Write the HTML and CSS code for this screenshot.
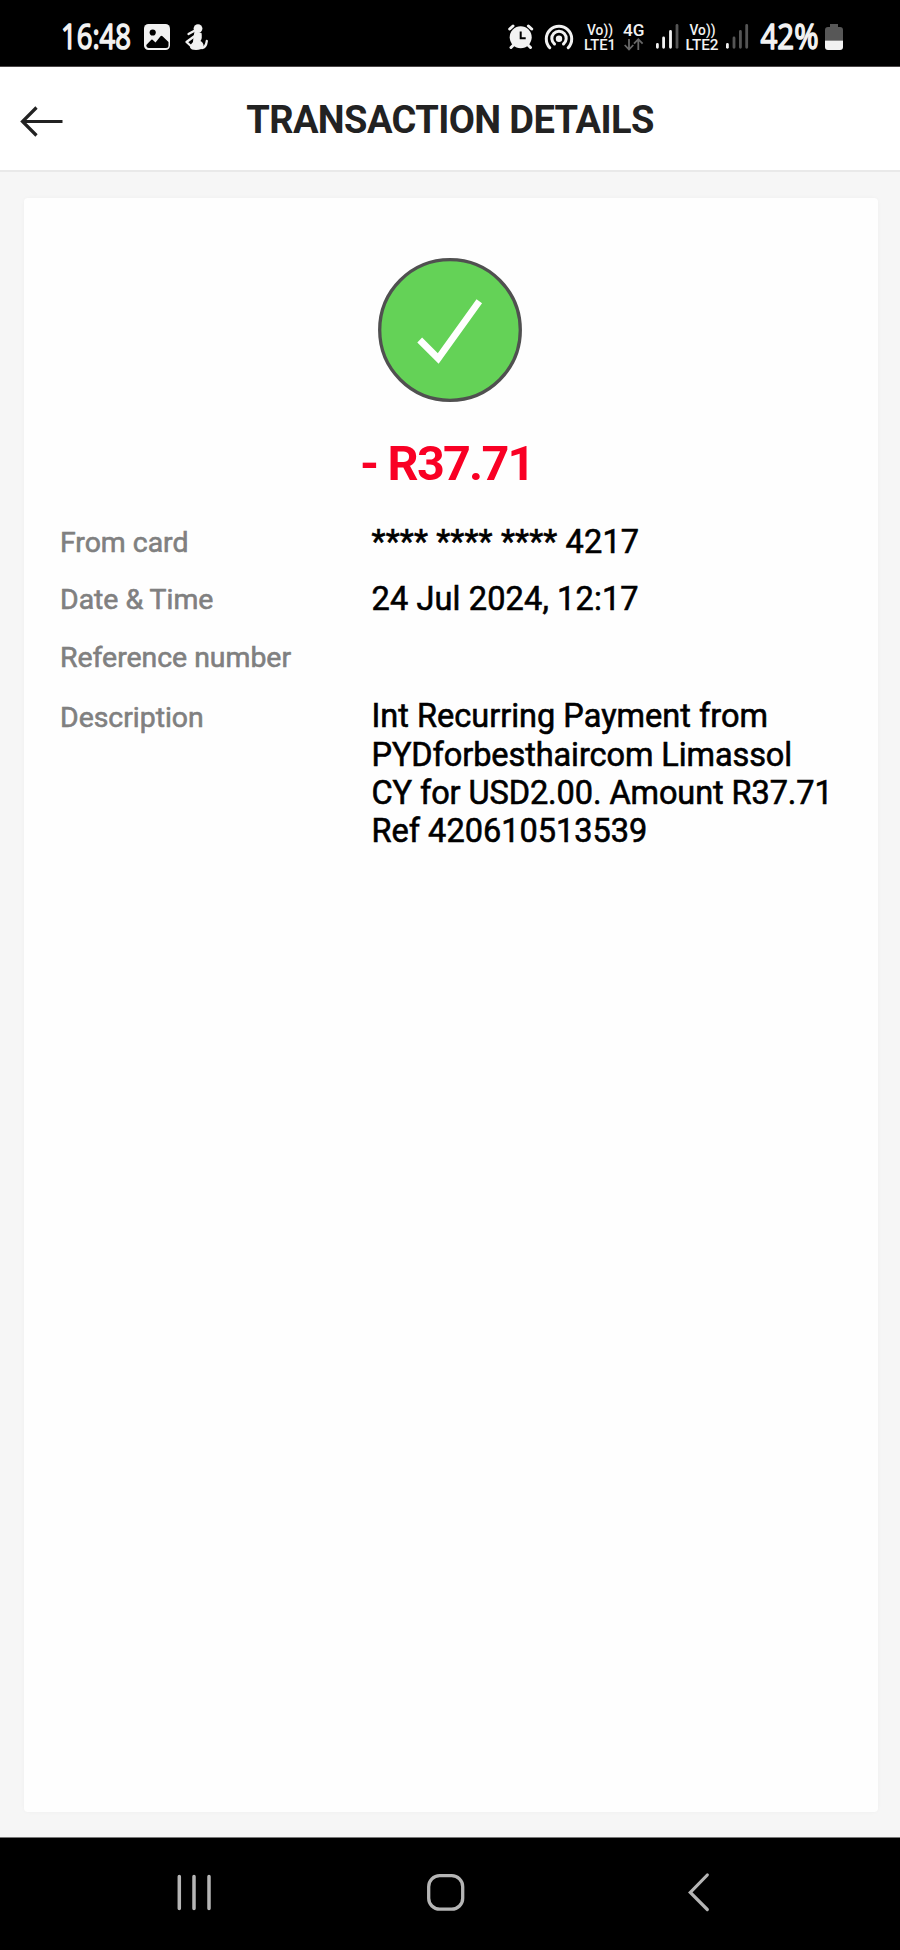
FILE: index.html
```html
<!DOCTYPE html>
<html lang="en">
<head>
<meta charset="utf-8">
<title>Transaction details</title>
<link rel="stylesheet" href="styles.css">
</head>
<body>
<div class="screen">
  <div class="status">
    <div class="status-group">
      <svg width="80" height="66" viewBox="60 0 80 66"><text class="hand" x="61" y="48.5" font-size="34" textLength="70" lengthAdjust="spacingAndGlyphs">16:48</text></svg>
      <svg width="40" height="66" viewBox="140 0 40 66">
        <rect x="144" y="24" width="26" height="26" rx="4.5" fill="#f2f2f2"/>
        <circle cx="152.7" cy="32.5" r="3.1"/>
        <path d="M146.3 45l5-5.2q.8-.6 1.6.1l2.600 2.500 5-6.200q1-1 2 0l6 5.800v3.500q0 2.500-2.500 2.500h-17q-2.700 0-2.700-3z"/>
      </svg>
      <svg width="32" height="66" viewBox="180 0 32 66">
        <g fill="#f2f2f2">
          <circle cx="198" cy="28.600" r="4.400"/>
          <path d="M194.500 31.500l7 1.500q1 5-1 8 3.500 2 3 5.500-2 3.500-7.500 3.500-5 0-6-2.500 0-3 3-5.500 0-4 1.500-10.500z"/>
        </g>
        <path d="M194 31l-5.500 3M194 36.500l-7.500 5.500 5.500 5M202 48q4-.500 4.800-7" fill="none" stroke="#f2f2f2" stroke-width="2.300" stroke-linecap="round" stroke-linejoin="round"/>
      </svg>
    </div>
    <div class="status-group">
      <svg width="40" height="66" viewBox="500 0 40 66">
        <g fill="none" stroke="#f2f2f2" stroke-width="3" stroke-linecap="round"><path d="M509.700 29l3.300-3M531.700 29l-3.300-3M513.500 45l-2.500 2.500M528 45l2.500 2.500"/></g>
        <circle cx="520.700" cy="37.300" r="11" fill="#f2f2f2"/>
        <path d="M520.700 31.500v6.700h5" fill="none" stroke="#000" stroke-width="2"/>
      </svg>
      <svg width="40" height="66" viewBox="540 0 40 66">
        <g fill="none" stroke="#f2f2f2" stroke-width="3" stroke-linecap="round"><path d="M549.800 47.700a12.700 12.700 0 1 1 18.400 0M554.500 44a7.200 7.200 0 1 1 9 0"/></g>
        <circle cx="559" cy="38.800" r="3.200" fill="#f2f2f2"/>
      </svg>
      <svg width="40" height="66" viewBox="580 0 40 66"><g class="net"><text x="587" y="35" font-size="14.500" textLength="26" lengthAdjust="spacingAndGlyphs">Vo))</text><text x="584" y="49.500" font-size="15" textLength="32" lengthAdjust="spacingAndGlyphs">LTE1</text></g></svg>
      <svg width="32" height="66" viewBox="620 0 32 66"><text class="net" x="623" y="35.500" font-size="16.500" textLength="21.500" lengthAdjust="spacingAndGlyphs">4G</text><path d="M629 39v10M624.700 45l4.300 4.500 4.300-4.500M638.300 50v-10.500M634 43.700l4.300-4.500 4.300 4.500" fill="none" stroke="#686868" stroke-width="1.800"/></svg>
      <svg width="32" height="66" viewBox="652 0 32 66"><g stroke-width="2.800" stroke-linecap="round" stroke="#f2f2f2"><path d="M657.400 44.500v2.800M663.600 38v9.300M670.500 31.500v15.800"/><path d="M677 25.500v21.800" stroke="#555"/></g></svg>
      <svg width="38" height="66" viewBox="684 0 38 66"><g class="net"><text x="689.500" y="35" font-size="14.500" textLength="26" lengthAdjust="spacingAndGlyphs">Vo))</text><text x="685.500" y="49.500" font-size="15" textLength="33" lengthAdjust="spacingAndGlyphs">LTE2</text></g></svg>
      <svg width="32" height="66" viewBox="722 0 32 66"><g stroke-width="2.800" stroke-linecap="round" stroke="#555"><path d="M727.400 44.500v2.800" stroke="#f2f2f2"/><path d="M734 38v9.300M740.400 31.500v15.800M746.700 25.500v21.800"/></g></svg>
      <svg width="68" height="66" viewBox="754 0 68 66"><text class="hand" x="760.500" y="48.500" font-size="34" textLength="58" lengthAdjust="spacingAndGlyphs">42%</text></svg>
      <svg width="26" height="66" viewBox="822 0 26 66"><path d="M830 24h8v3h2q3 0 3 3v10.500h-18V30q0-3 3-3h2z" fill="#575757"/><path d="M825 40.500h18V47q0 3-3 3h-12q-3 0-3-3z" fill="#f2f2f2"/></svg>
    </div>
  </div>
  <header class="header">
    <svg class="back" width="44" height="32" viewBox="20 105 44 32"><path d="M62.500 121.500H22.500M36.500 107.500l-14 14 14 14" fill="none" stroke="#222" stroke-width="3.200"/></svg>
    <h1 class="title">TRANSACTION DETAILS</h1>
  </header>
  <main class="content">
    <section class="card">
      <svg class="badge" width="144" height="144" viewBox="378 258 144 144"><circle cx="450" cy="330" r="70.300" fill="#64d257" stroke="#505050" stroke-width="3.300"/><path d="M419.700 340l18.500 18.500L479.300 301.300" fill="none" stroke="#fff" stroke-width="6.800"/></svg>
      <div class="amount">- R37.71</div>
      <dl class="details">
        <dt>From card</dt><dd class="wide">**** **** **** 4217</dd>
        <dt>Date &amp; Time</dt><dd class="wide">24 Jul 2024, 12:17</dd>
        <dt>Reference number</dt><dd></dd>
        <dt class="last">Description</dt><dd class="last">Int Recurring Payment from<br><span class="tight">PYDforbesthaircom Limassol<br>CY for USD2.00. Amount R37.71</span><br>Ref 420610513539</dd>
      </dl>
    </section>
  </main>
  <nav class="nav">
    <svg width="300" height="60" viewBox="44 1862 300 60"><path d="M179.300 1876.500v32M194 1876.500v32M209 1876.500v32" stroke="#b5b5b5" stroke-width="3.500" stroke-linecap="round"/></svg>
    <svg width="204" height="60" viewBox="344 1862 204 60"><rect x="428.700" y="1875.700" width="34" height="33.500" rx="11" fill="none" stroke="#b5b5b5" stroke-width="3.300"/></svg>
    <svg width="300" height="60" viewBox="548 1862 300 60"><path d="M707.300 1875l-17 17.500 17 17" fill="none" stroke="#b5b5b5" stroke-width="3.200" stroke-linecap="round"/></svg>
  </nav>
</div>
</body>
</html>
```
FILE: styles.css
```css
* { box-sizing: border-box; }
body { margin: 0; font-family: Roboto, "Liberation Sans", sans-serif; }
svg { display: block; flex: none; overflow: visible; }
.screen { display: flex; flex-direction: column; width: 900px; height: 1950px; background: #f6f6f6; }
.status { display: flex; justify-content: space-between; height: 67px; padding: 0 52px 0 60px; background: #000; border-bottom: 1px solid #4b4748; }
.status-group { display: flex; }
.hand { font-family: "Open Sans", "Noto Sans", sans-serif; font-weight: 400; fill: #f2f2f2; stroke: #f2f2f2; stroke-width: 1.5; stroke-linejoin: round; }
.net { font-family: Roboto, sans-serif; font-weight: 500; fill: #f2f2f2; }
.header { display: grid; grid-template-columns: 44px 1fr 44px; align-items: center; height: 105px; padding: 0 20px; background: #fff; border-bottom: 2px solid #e9e9e9; }
.back { margin-top: 5px; }
.title { margin: 2px 0 0; text-align: center; font-size: 38px; line-height: 44px; font-weight: 700; letter-spacing: -.6px; color: #222; }
.content { flex: 1; padding: 26px 22.5px 25px 24px; }
.card { height: 100%; padding: 60px 36px 0; background: #fefefe; border-radius: 4px; box-shadow: 0 0 4px rgba(0,0,0,.03); }
.badge { margin: 0 0 0 318px; }
.amount { margin-top: 33px; padding-right: 8px; text-align: center; font-size: 48.5px; line-height: 58px; font-weight: 700; letter-spacing: -1.75px; color: #f90024; }
.details { display: grid; grid-template-columns: 311.5px 1fr; row-gap: 17.8px; margin: 29.5px 0 0; }
.details dt { padding-top: 1.4px; font-size: 28.4px; line-height: 38.3px; color: #808080; -webkit-text-stroke: .6px #808080; }
.details dd { margin: 0; font-size: 32.5px; line-height: 38.3px; white-space: nowrap; color: #000; -webkit-text-stroke: .6px #000; }
.details .wide { letter-spacing: .13px; }
.details .tight { letter-spacing: -.09px; }
.details dt.last { padding-top: 3.9px; }
.details dd.last { padding-top: 2.5px; }
.nav { display: flex; padding: 24px 52px 0 44px; height: 113px; background: #000; border-top: 1px solid #777; }
```
